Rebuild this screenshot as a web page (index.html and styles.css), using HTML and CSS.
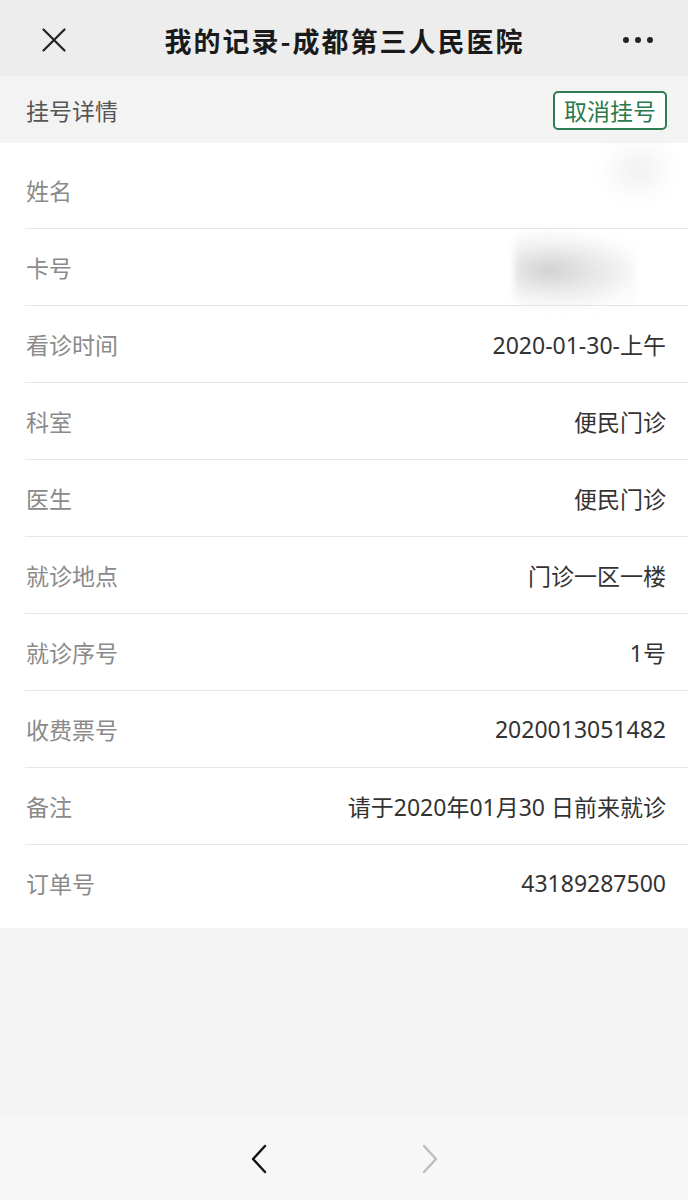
FILE: index.html
```html
<!DOCTYPE html>
<html lang="zh-CN">
<head>
<meta charset="utf-8">
<title>我的记录-成都第三人民医院</title>
<link rel="stylesheet" href="styles.css">
</head>
<body>
<div class="page">
  <header class="navbar">
    <div class="nav-left">
      <svg class="icon-close" width="24" height="24" viewBox="0 0 24 24"><path d="M1.5 1.5 L22.5 22.5 M22.5 1.5 L1.5 22.5" stroke="#222" stroke-width="2.2" fill="none" stroke-linecap="round"/></svg>
    </div>
    <h1 class="nav-title">我的记录-成都第三人民医院</h1>
    <div class="nav-right">
      <span class="dot"></span><span class="dot"></span><span class="dot"></span>
    </div>
  </header>

  <section class="subheader">
    <span class="sub-title">挂号详情</span>
    <button class="cancel-btn">取消挂号</button>
  </section>

  <section class="list">
    <div class="row"><span class="label">姓名</span><span class="value masked"><span class="smudge smudge-faint"></span></span></div>
    <div class="row"><span class="label">卡号</span><span class="value masked"><span class="smudge smudge-dark"></span></span></div>
    <div class="row"><span class="label">看诊时间</span><span class="value">2020-01-30-上午</span></div>
    <div class="row"><span class="label">科室</span><span class="value">便民门诊</span></div>
    <div class="row"><span class="label">医生</span><span class="value">便民门诊</span></div>
    <div class="row"><span class="label">就诊地点</span><span class="value">门诊一区一楼</span></div>
    <div class="row"><span class="label">就诊序号</span><span class="value">1号</span></div>
    <div class="row"><span class="label">收费票号</span><span class="value">2020013051482</span></div>
    <div class="row"><span class="label">备注</span><span class="value">请于2020年01月30 日前来就诊</span></div>
    <div class="row"><span class="label">订单号</span><span class="value">43189287500</span></div>
  </section>

  <div class="spacer"></div>

  <footer class="toolbar">
    <svg class="chev" width="20" height="30" viewBox="0 0 20 30"><path d="M15 2 L3 15 L15 28" stroke="#111" stroke-width="2.4" fill="none" stroke-linecap="round" stroke-linejoin="round"/></svg>
    <svg class="chev" width="20" height="30" viewBox="0 0 20 30"><path d="M5 2 L17 15 L5 28" stroke="#bdbdbd" stroke-width="2.4" fill="none" stroke-linecap="round" stroke-linejoin="round"/></svg>
  </footer>
</div>
</body>
</html>
```

FILE: styles.css
```css
* { box-sizing: border-box; }

html, body {
  margin: 0;
  padding: 0;
}

body {
  font-family: "Noto Sans CJK SC", "Noto Sans", "Liberation Sans", sans-serif;
  background: #f3f3f3;
  color: #333;
}

.page {
  width: 688px;
  height: 1200px;
  display: flex;
  flex-direction: column;
  overflow: hidden;
}

/* top navigation */
.navbar {
  height: 76px;
  background: #ededed;
  display: grid;
  grid-template-columns: 1fr auto 1fr;
  align-items: center;
  padding: 0 35px 0 42px;
}

.nav-left {
  display: flex;
  align-items: center;
}

.icon-close {
  display: block;
  margin-top: 4px;
}

.nav-title {
  margin: 4px 6px 0 0;
  font-size: 27px;
  font-weight: 700;
  letter-spacing: 2px;
  color: #1a1a1a;
  line-height: 1;
}

.nav-right {
  display: flex;
  justify-content: flex-end;
  align-items: center;
  gap: 6px;
  margin-top: 4px;
}

.dot {
  width: 6px;
  height: 6px;
  border-radius: 50%;
  background: #222;
}

/* sub header */
.subheader {
  height: 67px;
  display: flex;
  align-items: center;
  justify-content: space-between;
  padding: 0 21px 0 26px;
  background: #f3f3f3;
}

.sub-title {
  font-size: 23px;
  color: #555;
}

.cancel-btn {
  font-family: inherit;
  font-size: 23px;
  line-height: 35px;
  height: 39px;
  padding: 0 9px;
  margin-top: 2px;
  color: #2b7a4b;
  background: #fff;
  border: 2px solid #2e7d50;
  border-radius: 5px;
}

/* list */
.list {
  background: #fff;
  padding: 9px 0 7px 25px;
}

.row {
  height: 77px;
  display: flex;
  align-items: center;
  justify-content: space-between;
  padding-right: 22px;
  border-bottom: 1px solid #e6e6e6;
  padding-left: 1px;
}

.row:last-child {
  border-bottom: none;
  height: 76px;
}

.label {
  font-size: 23px;
  color: #8a8a8a;
}

.value {
  font-family: "Noto Sans", "Noto Sans CJK SC", sans-serif;
  font-size: 23px;
  color: #333;
}

.masked {
  position: relative;
  width: 120px;
  height: 40px;
}

.smudge {
  position: absolute;
  display: block;
}

.smudge-faint {
  right: -12px;
  top: -35px;
  width: 80px;
  height: 70px;
  background: radial-gradient(ellipse at 50% 50%, rgba(215,215,215,0.35), rgba(235,235,235,0.15) 55%, rgba(255,255,255,0) 75%);
  filter: blur(3px);
}

.smudge-dark {
  right: 30px;
  top: -20px;
  width: 122px;
  height: 86px;
  background:
    radial-gradient(ellipse at 28% 50%, rgba(175,175,175,0.55), rgba(205,205,205,0.3) 40%, rgba(255,255,255,0) 70%),
    radial-gradient(ellipse at 70% 55%, rgba(220,220,220,0.35), rgba(255,255,255,0) 60%);
  filter: blur(3px);
}

.spacer {
  flex: 1;
  background: #f3f3f3;
}

/* bottom toolbar */
.toolbar {
  height: 83px;
  background: #f7f7f7;
  display: flex;
  align-items: center;
  justify-content: center;
  gap: 149px;
}

.chev {
  display: block;
}
```
